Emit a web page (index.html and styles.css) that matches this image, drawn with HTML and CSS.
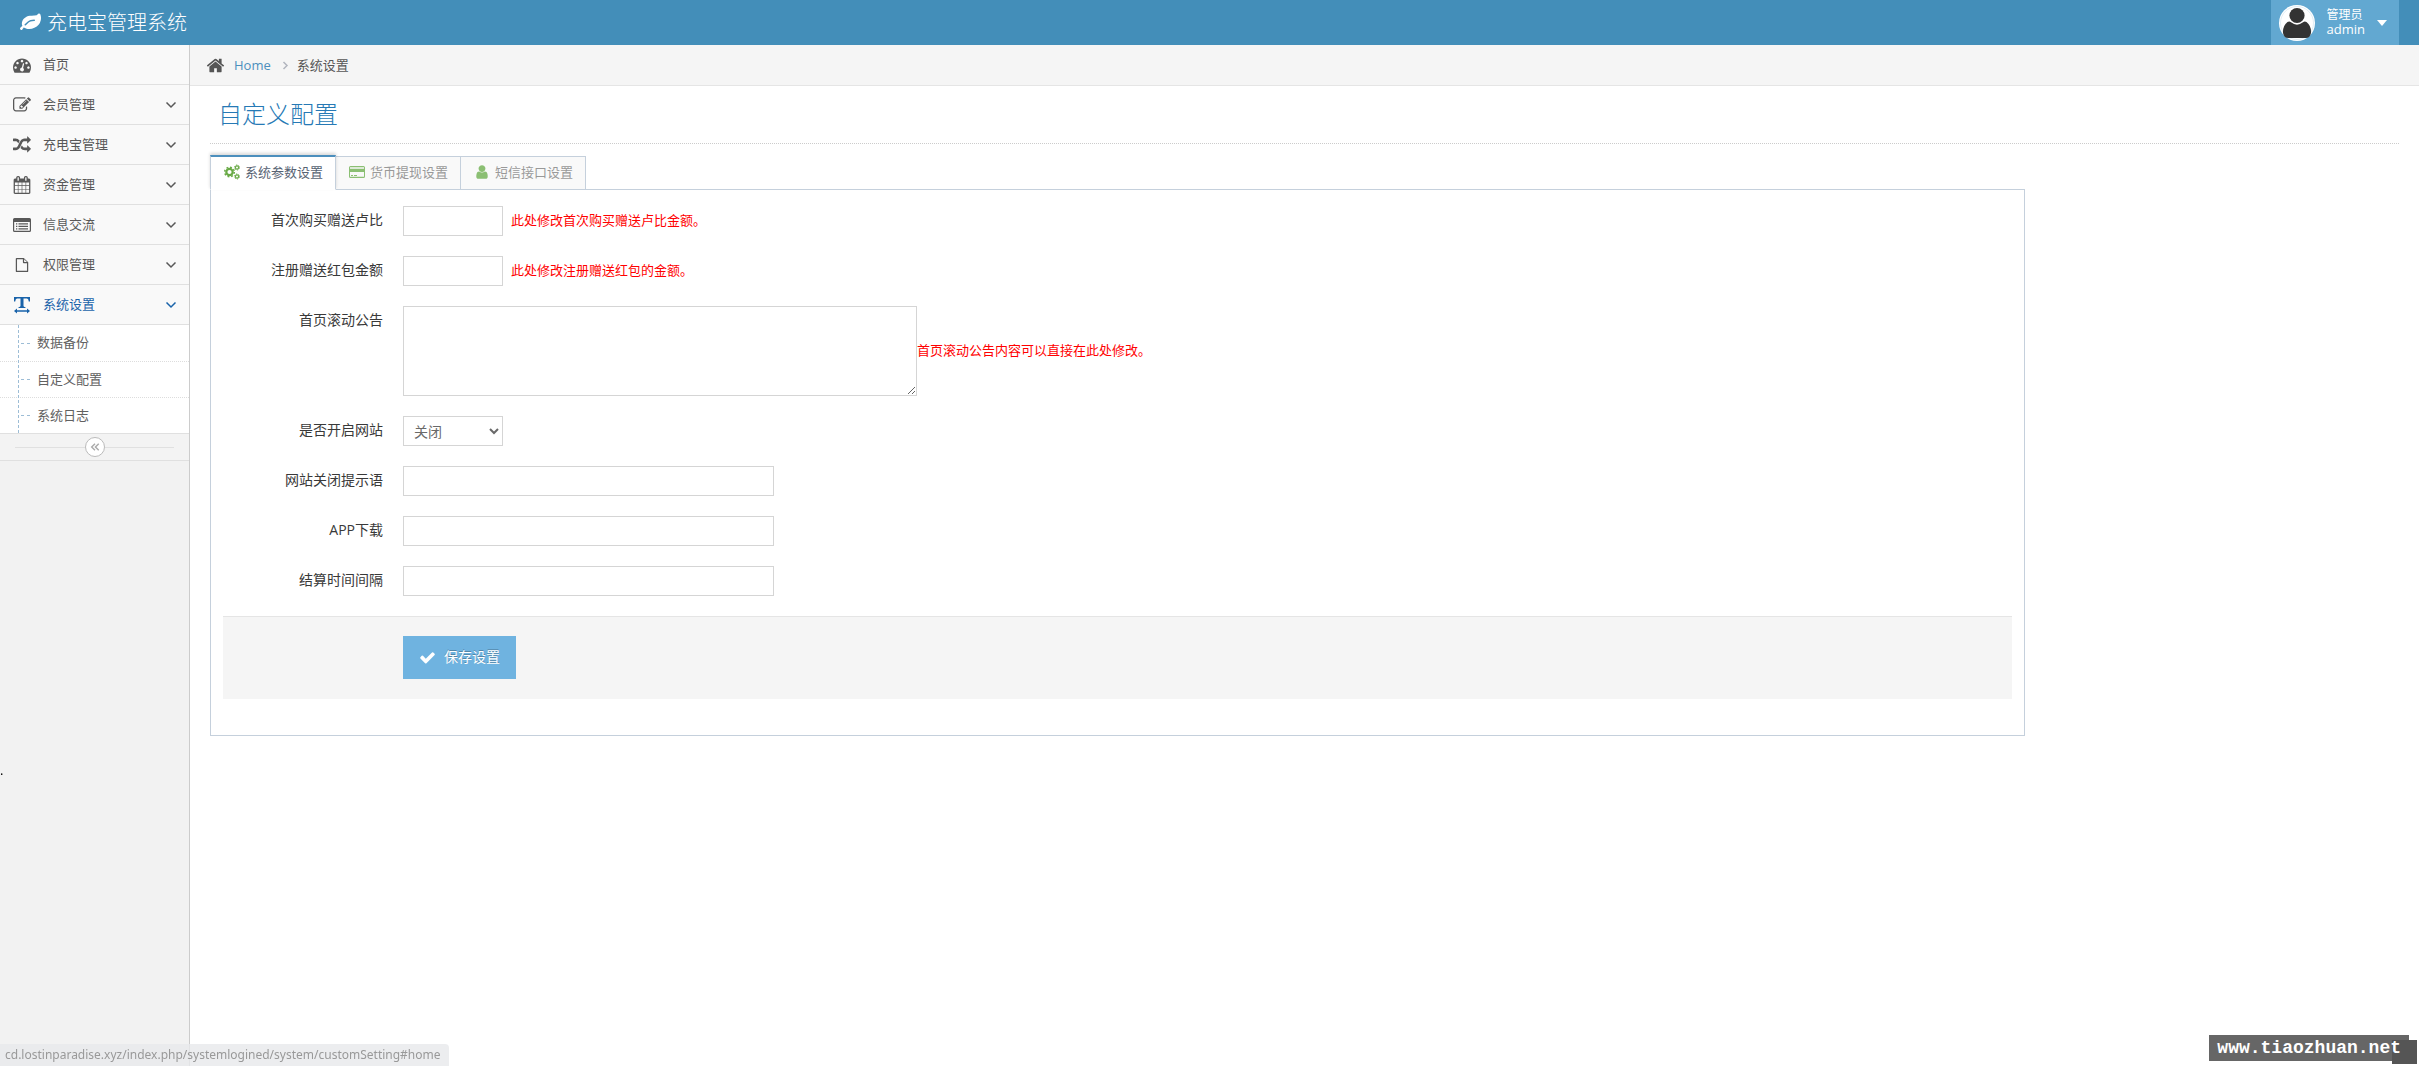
FILE: index.html
```html
<!DOCTYPE html>
<html lang="zh-CN">
<head>
<meta charset="utf-8">
<title>充电宝管理系统</title>
<link rel="stylesheet" href="styles.css">
</head>
<body>
<svg class="sprite" aria-hidden="true">
  <symbol id="leaf" viewBox="0 0 1792 1792"><path d="M1280 704q0-26-19-45t-45-19q-172 0-318 49.500t-259.500 134-235.500 219.500q-19 21-19 45 0 26 19 45t45 19q24 0 45-19 27-24 74-71t67-66q137-124 268.500-176t313.500-52q26 0 45-19t19-45zm512-198q0 95-20 193-46 224-184.500 383t-357.500 268q-214 108-438 108-148 0-286-47-15-5-88-42t-96-37q-16 0-39.500 32t-45 70-52.500 70-60 32q-43 0-63.500-17.500t-45.500-59.500q-2-4-6-11t-5.500-10-3-9.500-1.500-13.500q0-35 31-73.500t68-65.500 68-56 31-48q0-4-14-38t-16-44q-9-51-9-104 0-115 43.500-220t119-184.500 170.500-139 204-95.500q55-18 145-25.500t179.500-9 178.500-6 163.500-24 113.500-56.500l29.500-29.500 29.500-28 27-20 36.500-16 43.500-4.500q39 0 70.500 46t47.500 112 24 124 8 96z"/></symbol>
  <symbol id="gauge" viewBox="0 0 1792 1792"><path d="M384 1152q0-53-37.500-90.500t-90.500-37.500-90.500 37.500-37.500 90.500 37.500 90.500 90.500 37.500 90.500-37.500 37.500-90.500zm192-448q0-53-37.500-90.500t-90.500-37.500-90.500 37.500-37.500 90.500 37.500 90.500 90.500 37.500 90.500-37.500 37.500-90.500zm428 481l101-382q6-26-7.500-48.500t-38.500-29.500-48 6.500-30 39.500l-101 382q-60 5-107 43.500t-63 98.500q-20 77 20 146t117 89 146-20 89-117q16-60-6-117t-72-91zm660-33q0-53-37.500-90.500t-90.500-37.500-90.500 37.500-37.500 90.500 37.500 90.500 90.500 37.500 90.500-37.500 37.500-90.500zm-640-640q0-53-37.500-90.500t-90.500-37.500-90.500 37.500-37.500 90.500 37.500 90.500 90.500 37.500 90.500-37.500 37.500-90.500zm448 192q0-53-37.500-90.500t-90.500-37.500-90.500 37.500-37.500 90.500 37.500 90.500 90.500 37.500 90.500-37.500 37.500-90.500zm320 448q0 261-141 483-19 29-54 29h-1402q-35 0-54-29-141-221-141-483 0-182 71-348t191-286 286-191 348-71 348 71 286 191 191 286 71 348z"/></symbol>
  <symbol id="edit" viewBox="0 0 1792 1792"><path d="M888 1184l116-116-152-152-116 116v56h96v96h56zm440-720q-16-16-33 1l-350 350q-17 17-1 33t33-1l350-350q17-17 1-33zm80 594v190q0 119-84.500 203.500t-203.500 84.500h-832q-119 0-203.500-84.500t-84.500-203.500v-832q0-119 84.500-203.500t203.500-84.500h832q63 0 117 25 15 7 18 23 3 17-9 29l-49 49q-14 14-32 8-23-6-45-6h-832q-66 0-113 47t-47 113v832q0 66 47 113t113 47h832q66 0 113-47t47-113v-126q0-13 9-22l64-64q15-15 35-7t20 29zm-96-738l288 288-672 672h-288v-288zm444 132l-92 92-288-288 92-92q28-28 68-28t68 28l152 152q28 28 28 68t-28 68z"/></symbol>
  <symbol id="shuffle" viewBox="0 0 1792 1792"><path d="M666 481q-60 92-137 273-22-45-37-72.500t-40.500-63.500-51-56.500-63-35-81.500-14.500h-224q-14 0-23-9t-9-23v-192q0-14 9-23t23-9h224q250 0 410 225zm1126 799q0 14-9 23l-320 320q-9 9-23 9-13 0-22.500-9.500t-9.500-22.500v-192q-32 0-85 .5t-81 1-73-1-71-5-64-10.500-63-18.500-58-28.500-59-40-55-53.500-56-69.500q59-93 136-273 22 45 37 72.500t40.500 63.500 51 56.500 63 35 81.500 14.500h256v-192q0-14 9-23t23-9q12 0 24 10l319 319q9 9 9 23zm0-896q0 14-9 23l-320 320q-9 9-23 9-13 0-22.500-9.500t-9.500-22.500v-192h-256q-48 0-87 15t-69 45-51 61.500-45 77.500q-32 62-78 171-29 66-49.500 111t-54 105-64 100-74 83-90 68.500-106.500 42-128 16.500h-224q-14 0-23-9t-9-23v-192q0-14 9-23t23-9h224q48 0 87-15t69-45 51-61.500 45-77.500q32-62 78-171 29-66 49.500-111t54-105 64-100 74-83 90-68.500 106.500-42 128-16.500h256v-192q0-14 9-23t23-9q12 0 24 10l319 319q9 9 9 23z"/></symbol>
  <symbol id="calendar" viewBox="0 0 1792 1792"><path d="M192 1664h288v-288h-288v288zm352 0h320v-288h-320v288zm-352-352h288v-320h-288v320zm352 0h320v-320h-320v320zm-352-384h288v-288h-288v288zm736 736h320v-288h-320v288zm-384-736h320v-288h-320v288zm768 736h288v-288h-288v288zm-384-352h320v-320h-320v320zm-352-864v-288q0-13-9.500-22.500t-22.500-9.500h-64q-13 0-22.500 9.500t-9.500 22.500v288q0 13 9.500 22.500t22.500 9.500h64q13 0 22.500-9.500t9.500-22.500zm736 864h288v-320h-288v320zm-384-384h320v-288h-320v288zm384 0h288v-288h-288v288zm32-480v-288q0-13-9.500-22.500t-22.500-9.500h-64q-13 0-22.500 9.500t-9.500 22.500v288q0 13 9.500 22.500t22.500 9.500h64q13 0 22.500-9.500t9.500-22.500zm384-64v1280q0 52-38 90t-90 38h-1408q-52 0-90-38t-38-90v-1280q0-52 38-90t90-38h128v-96q0-66 47-113t113-47h64q66 0 113 47t47 113v96h384v-96q0-66 47-113t113-47h64q66 0 113 47t47 113v96h128q52 0 90 38t38 90z"/></symbol>
  <symbol id="list" viewBox="0 0 18 18"><path fill-rule="evenodd" d="M1.500 2h15Q18 2 18 3.500v11q0 1.500-1.500 1.500h-15Q0 16 0 14.500v-11Q0 2 1.500 2zM1.200 6v8.300q0 .5.500.5h14.600q.5 0 .5-.5V6zM3 7.200h1.300v1.300H3zm2.500 0H15v1.300H5.500zM3 9.700h1.300V11H3zm2.500 0H15V11H5.500zM3 12.200h1.300v1.300H3zm2.500 0H15v1.300H5.500z"/></symbol>
  <symbol id="file" viewBox="0 0 18 18"><path fill-rule="evenodd" d="M3 1h8l5 5v10q0 1-1 1H3q-1 0-1-1V2q0-1 1-1zm.4 1.400v13.200h11.200V7H11q-1 0-1-1V2.400zm8 0v3.200h3.200z"/></symbol>
  <symbol id="textw" viewBox="0 0 18 18"><path d="M1 1h16v4.500h-1.200Q15.400 2.600 14 2.600h-3.500V10q0 1 2 1.200V12h-7v-.8q2-.2 2-1.200V2.600H4Q2.600 2.600 2.200 5.500H1zM1 15l3-2.500v1.800h10v-1.800l3 2.500-3 2.500v-1.800H4v1.800z"/></symbol>
  <symbol id="home" viewBox="0 0 1792 1792"><path d="M1472 992v480q0 26-19 45t-45 19h-384v-384h-256v384h-384q-26 0-45-19t-19-45v-480q0-1 .5-3t.5-3l575-474 575 474q1 2 1 6zm223-69l-62 74q-8 9-21 11h-3q-13 0-21-7l-692-577-692 577q-12 8-24 7-13-2-21-11l-62-74q-8-10-7-23.500t11-21.500l719-599q32-26 76-26t76 26l244 204v-195q0-14 9-23t23-9h192q14 0 23 9t9 23v408l219 182q10 8 11 21.500t-7 23.500z"/></symbol>
  <symbol id="cogs" viewBox="0 0 16 16"><g fill="none" stroke="currentColor"><circle cx="5.500" cy="8" r="3.200" stroke-width="2.200"/><circle cx="5.500" cy="8" r="4.800" stroke-width="1.500" stroke-dasharray="1.880 1.890"/><circle cx="13" cy="3.500" r="1.600" stroke-width="1.200"/><circle cx="13" cy="3.500" r="2.500" stroke-width="1" stroke-dasharray="1.300 1.320"/><circle cx="13" cy="12.500" r="1.600" stroke-width="1.200"/><circle cx="13" cy="12.500" r="2.500" stroke-width="1" stroke-dasharray="1.300 1.320"/></g></symbol>
  <symbol id="card" viewBox="0 0 16 16"><path fill-rule="evenodd" d="M1.500 2h13Q16 2 16 3.500v9q0 1.500-1.500 1.500h-13Q0 14 0 12.500v-9Q0 2 1.500 2zM1 3.300v1.400h14V3.300zM1 8v4.700h14V8zm1 3h2v1H2zm3 0h3v1H5z"/></symbol>
  <symbol id="user" viewBox="0 0 1792 1792"><path d="M1536 1399q0 109-62.500 187t-150.500 78h-854q-88 0-150.500-78t-62.500-187q0-85 8.500-160.500t31.500-152 58.500-131 94-89 134.500-34.500q131 128 313 128t313-128q76 0 134.500 34.500t94 89 58.500 131 31.500 152 8.500 160.500zm-256-887q0 159-112.500 271.500t-271.500 112.500-271.500-112.500-112.500-271.500 112.500-271.500 271.500-112.500 271.500 112.500 112.500 271.500z"/></symbol>
  <symbol id="check" viewBox="0 0 1792 1792"><path d="M1671 566q0 40-28 68l-724 724-136 136q-28 28-68 28t-68-28l-136-136-362-362q-28-28-28-68t28-68l136-136q28-28 68-28t68 28l294 295 656-657q28-28 68-28t68 28l136 136q28 28 28 68z"/></symbol>
  <symbol id="down" viewBox="0 0 12 12"><path fill="none" stroke="currentColor" stroke-width="1.500" d="M1.500 3.500L6 8l4.500-4.500"/></symbol>
  <symbol id="right" viewBox="0 0 12 12"><path fill="none" stroke="currentColor" stroke-width="1.500" d="M4.500 3l3.500 3.500L4.500 10"/></symbol>
  <symbol id="dbl-left" viewBox="0 0 12 12"><path fill="none" stroke="currentColor" stroke-width="1.700" d="M6 2L2 6l4 4M10.500 2l-4 4 4 4"/></symbol>
  <symbol id="caret" viewBox="0 0 10 6"><path d="M0 0h10L5 6z"/></symbol>
</svg>

<header class="navbar">
  <a class="brand" href="#"><svg class="brand-icon"><use href="#leaf"/></svg>充电宝管理系统</a>
  <button class="user" type="button">
    <svg class="avatar" viewBox="0 0 36 36"><circle cx="18" cy="18" r="18" fill="#fff"/><circle cx="18" cy="18" r="16.500" fill="none" stroke="#cfe2ee" stroke-width=".6"/><ellipse cx="18" cy="10.500" rx="7.600" ry="7.600" fill="#333"/><path fill="#333" d="M8.500 17q2-1 3.500.3Q18 22 24 17.300q1.500-1.300 3.500-.3 5 4 4.500 11-1 5-5 5H9q-4 0-5-5Q3.500 21 8.500 17z"/></svg>
    <span class="user-name"><small>管理员</small>admin</span>
    <svg class="caret"><use href="#caret"/></svg>
  </button>
</header>

<div class="layout">
  <aside class="sidebar">
    <nav>
      <ul class="menu">
        <li><a href="#"><svg class="icon"><use href="#gauge"/></svg><span>首页</span></a></li>
        <li><a href="#"><svg class="icon"><use href="#edit"/></svg><span>会员管理</span><svg class="arrow"><use href="#down"/></svg></a></li>
        <li><a href="#"><svg class="icon"><use href="#shuffle"/></svg><span>充电宝管理</span><svg class="arrow"><use href="#down"/></svg></a></li>
        <li><a href="#"><svg class="icon"><use href="#calendar"/></svg><span>资金管理</span><svg class="arrow"><use href="#down"/></svg></a></li>
        <li><a href="#"><svg class="icon"><use href="#list"/></svg><span>信息交流</span><svg class="arrow"><use href="#down"/></svg></a></li>
        <li><a href="#"><svg class="icon file"><use href="#file"/></svg><span>权限管理</span><svg class="arrow"><use href="#down"/></svg></a></li>
        <li class="open"><a href="#"><svg class="icon"><use href="#textw"/></svg><span>系统设置</span><svg class="arrow"><use href="#down"/></svg></a>
          <ul class="submenu">
            <li><a href="#"><span>数据备份</span></a></li>
            <li><a href="#"><span>自定义配置</span></a></li>
            <li><a href="#"><span>系统日志</span></a></li>
          </ul>
        </li>
      </ul>
    </nav>
    <div class="collapse"><button type="button" aria-label="收起菜单"><svg><use href="#dbl-left"/></svg></button></div>
  </aside>

  <main class="main">
    <nav class="crumbs">
      <svg class="home"><use href="#home"/></svg>
      <a href="#">Home</a>
      <svg class="sep"><use href="#right"/></svg>
      <span>系统设置</span>
    </nav>
    <div class="content">
      <h1>自定义配置</h1>
      <div class="panel">
        <div class="tabs">
          <button class="tab active" type="button"><svg><use href="#cogs"/></svg>系统参数设置</button>
          <button class="tab" type="button"><svg><use href="#card"/></svg>货币提现设置</button>
          <button class="tab" type="button"><svg><use href="#user"/></svg>短信接口设置</button>
        </div>
        <form class="pane">
          <div class="row"><label for="rupee">首次购买赠送卢比</label><input class="short" id="rupee" type="text"><span class="help">此处修改首次购买赠送卢比金额。</span></div>
          <div class="row"><label for="bonus">注册赠送红包金额</label><input class="short" id="bonus" type="text"><span class="help">此处修改注册赠送红包的金额。</span></div>
          <div class="row notice"><label for="notice">首页滚动公告</label><textarea id="notice"></textarea><span class="help">首页滚动公告内容可以直接在此处修改。</span></div>
          <div class="row"><label for="open">是否开启网站</label><select class="short" id="open"><option>关闭</option><option>开启</option></select></div>
          <div class="row"><label for="tip">网站关闭提示语</label><input id="tip" type="text"></div>
          <div class="row"><label for="app">APP下载</label><input id="app" type="text"></div>
          <div class="row"><label for="interval">结算时间间隔</label><input id="interval" type="text"></div>
          <div class="actions"><button class="save" type="submit"><svg><use href="#check"/></svg>保存设置</button></div>
        </form>
      </div>
    </div>
  </main>
</div>

<span class="stray">.</span>
<div class="status">cd.lostinparadise.xyz/index.php/systemlogined/system/customSetting#home</div>
<div class="watermark">www.tiaozhuan.net</div>
</body>
</html>
```

FILE: styles.css
```css
* { box-sizing: border-box; }

body {
  margin: 0;
  min-height: 100vh;
  display: flex;
  flex-direction: column;
  background: #fff;
  color: #393939;
  font: 400 13px/20px "Open Sans", "Noto Sans CJK SC", sans-serif;
}

a { color: inherit; text-decoration: none; }
ul { margin: 0; padding: 0; list-style: none; }
svg { fill: currentColor; flex: none; }
button, input, select, textarea { font: inherit; border-radius: 0; }
.sprite { display: none; }

/* top bar */
.navbar {
  display: flex;
  align-items: center;
  justify-content: space-between;
  height: 45px;
  padding: 0 20px;
  background: #438eb9;
  color: #fff;
}
.brand { display: flex; align-items: center; gap: 6px; font-size: 20px; font-weight: 300; }
.brand-icon { width: 21px; height: 21px; }
.user {
  display: flex;
  align-items: center;
  gap: 12px;
  height: 45px;
  padding: 0 12px 0 8px;
  border: 0;
  background: #62a8d1;
  color: #fff;
  line-height: 15px;
  text-align: left;
}
.avatar { width: 36px; height: 36px; }
.user-name { padding-bottom: 2px; }
.user-name small { display: block; font-size: 12px; }
.caret { width: 10px; height: 6px; }

.layout { display: flex; flex: 1; }

/* sidebar */
.sidebar {
  width: 190px;
  flex: none;
  background: #f2f2f2;
  border-right: 1px solid #ccc;
}
.menu { color: #585858; }
.menu > li > a {
  display: flex;
  align-items: center;
  height: 40px;
  padding: 0 12px 0 13px;
  gap: 12px;
  background: #f9f9f9;
  border-bottom: 1px solid #e0e0e0;
}
.menu span { flex: 1; padding-bottom: 2px; }
.icon { width: 18px; height: 18px; }
.file { padding: 1px; }
.arrow { width: 12px; height: 12px; }
.open > a { color: #1963aa; }
.submenu {
  position: relative;
  background: #fff;
  color: #616161;
  border-bottom: 1px solid #e0e0e0;
}
.submenu::before {
  content: "";
  position: absolute;
  left: 18px;
  top: 0;
  bottom: 0;
  border-left: 1px dashed #9dbdd6;
}
.submenu a {
  display: flex;
  align-items: center;
  gap: 7px;
  height: 36px;
  padding-left: 21px;
}
.submenu a::before { content: ""; width: 9px; border-top: 1px dashed #9dbdd6; }
.submenu li + li { border-top: 1px dotted #ddd; }
.submenu li + li a { height: 35px; }
.collapse {
  display: flex;
  align-items: center;
  height: 27px;
  padding: 0 15px;
  border-bottom: 1px solid #e0e0e0;
  background: #f3f3f3;
}
.collapse::before, .collapse::after { content: ""; flex: 1; border-top: 1px solid #e0e0e0; }
.collapse button {
  display: grid;
  place-items: center;
  width: 20px;
  height: 20px;
  padding: 0;
  border: 1px solid #bbb;
  border-radius: 50%;
  background: #fff;
  color: #aaa;
}
.collapse svg { width: 10px; height: 10px; }

/* page */
.main { flex: 1; min-width: 0; }
.crumbs {
  display: flex;
  align-items: center;
  height: 41px;
  padding: 0 16px;
  background: #f5f5f5;
  border-bottom: 1px solid #e5e5e5;
  color: #555;
}
.crumbs a { margin-left: 9px; color: #4c8fbd; }
.home { width: 19px; height: 19px; }
.sep { width: 12px; height: 12px; margin: 0 6px 0 8px; color: #b2b6bf; }
.content { padding: 8px 20px 24px; }
h1 {
  margin: 0 0 11px;
  padding: 0 8px 9px;
  border-bottom: 1px dotted #ccc;
  color: #2679b5;
  font-size: 24px;
  font-weight: 300;
  line-height: 40px;
}

/* tabbed panel */
.panel { width: 82.9%; }
.tabs { display: flex; align-items: flex-end; padding-left: 1px; }
.tab {
  display: flex;
  align-items: center;
  gap: 5px;
  height: 34px;
  margin-left: -1px;
  padding: 0 12px 2px 13px;
  border: 1px solid #c5d0dc;
  background: #f9f9f9;
  color: #999;
  position: relative;
  margin-bottom: -1px;
}
.tab svg { width: 16px; height: 16px; color: #8bbf73; }
.tab.active {
  z-index: 1;
  height: 35px;
  border-top: 2px solid #4c8fbd;
  border-bottom-color: #fff;
  background: #fff;
  box-shadow: 0 -2px 3px rgba(0, 0, 0, .15);
  color: #576373;
}
.tab.active svg { color: #69aa46; }
.pane {
  display: flex;
  flex-direction: column;
  gap: 20px;
  padding: 16px 12px 36px;
  border: 1px solid #c5d0dc;
}
.row { display: flex; align-items: center; }
.row label { width: 160px; margin-right: 20px; padding-bottom: 2px; text-align: right; font-size: 14px; }
.row.notice label { align-self: flex-start; line-height: 28px; }
.row input, .row select, .row textarea {
  width: 371px;
  height: 30px;
  padding: 4px 6px;
  border: 1px solid #d5d5d5;
  background: #fff;
  color: #696969;
  font-size: 14px;
}
.row .short { width: 100px; }
.row textarea { width: 514px; height: 90px; }
.help { padding-bottom: 3px; color: #f00; }
.short + .help { margin-left: 8px; }
.actions {
  padding: 19px 0 20px 180px;
  border-top: 1px solid #e5e5e5;
  background: #f5f5f5;
}
.save {
  display: flex;
  align-items: center;
  gap: 8px;
  height: 43px;
  padding: 0 16px 1px;
  border: 0;
  background: #6fb3e0;
  color: #fff;
  font-size: 14px;
  text-shadow: 0 -1px 0 rgba(0, 0, 0, .25);
}
.save svg { width: 17px; height: 17px; }

/* overlays */
.stray { position: fixed; left: 0; bottom: 286px; color: #000; }
.status {
  position: fixed;
  left: 0;
  bottom: 0;
  height: 22px;
  padding: 0 8px 0 5px;
  border-top-right-radius: 4px;
  background: rgba(231, 233, 235, .8);
  color: #999;
  font: 400 12px/22px "Noto Sans", sans-serif;
}
.watermark {
  position: fixed;
  right: 10px;
  bottom: 5px;
  height: 26px;
  padding: 0 8px;
  background: #666;
  color: #fff;
  font: 700 18px/26px "Liberation Mono", monospace;
}
.watermark::after {
  content: "";
  position: absolute;
  z-index: -1;
  right: -8px;
  bottom: -3px;
  width: 25px;
  height: 24px;
  background: #555;
}
```
